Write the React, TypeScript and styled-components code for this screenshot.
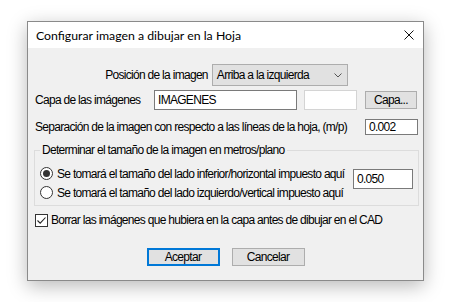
import styled, { createGlobalStyle } from "styled-components";

const GlobalStyle = createGlobalStyle`
  html, body {
    margin: 0;
    padding: 0;
    background: #fff;
  }
  body {
    width: 452px;
    height: 302px;
    overflow: hidden;
  }
`;

const Dialog = styled.div`
  margin: 21px 0 0 27px;
  width: 397px;
  height: 260px;
  box-sizing: border-box;
  border: 1px solid #8a8a8a;
  background: #f0f0f0;
  box-shadow: 0 5px 18px rgba(0, 0, 0, 0.28);
  display: flex;
  flex-direction: column;
  font-family: "Liberation Sans", Arial, sans-serif;
  font-size: 12px;
  letter-spacing: -0.7px;
  color: #000;
`;

const TitleBar = styled.div`
  height: 26px;
  flex: none;
  background: #fff;
  display: flex;
  align-items: center;
  justify-content: space-between;
  padding: 0 9px 0 8px;
  font-family: Lato, "Noto Sans", sans-serif;
  font-size: 12.3px;
  letter-spacing: 0;
`;

const Body = styled.div`
  padding: 16px 5px 0 7px;
  display: flex;
  flex-direction: column;
`;

const Row = styled.div<{ $top?: number; $h?: number; $center?: boolean }>`
  display: flex;
  align-items: center;
  height: ${({ $h }) => $h ?? 16}px;
  margin-top: ${({ $top }) => $top ?? 0}px;
  justify-content: ${({ $center }) => ($center ? "center" : "space-between")};
  white-space: nowrap;
`;

const Label = styled.span<{ $w?: number }>`
  ${({ $w }) => ($w ? `width: ${$w}px; flex: none;` : "")}
`;

const Select = styled.div`
  width: 136px;
  height: 22px;
  box-sizing: border-box;
  border: 1px solid #adadad;
  background: #e1e1e1;
  display: flex;
  align-items: center;
  justify-content: space-between;
  padding: 0 5px 0 4px;
`;

const Input = styled.div<{ $w: number; $h: number; $muted?: boolean }>`
  width: ${({ $w }) => $w}px;
  height: ${({ $h }) => $h}px;
  box-sizing: border-box;
  flex: none;
  background: #fff;
  border: 1px solid ${({ $muted }) => ($muted ? "#d4d4d4" : "#7a7a7a")};
  display: flex;
  align-items: center;
  padding-left: 3px;
`;

const Button = styled.div<{ $primary?: boolean; $w?: number }>`
  width: ${({ $w }) => $w ?? 73}px;
  height: 18px;
  box-sizing: border-box;
  flex: none;
  background: #e1e1e1;
  border: ${({ $primary }) => ($primary ? "2px solid #0078d7" : "1px solid #adadad")};
  display: flex;
  align-items: center;
  justify-content: center;
`;

const Group = styled.fieldset`
  margin: 8px -1px 0 -1px;
  padding: 7px 5px 3px 5px;
  border: 1px solid #dcdcdc;
  display: flex;
  align-items: flex-start;
  justify-content: space-between;
`;

const Legend = styled.legend`
  padding: 0 2px;
  line-height: 14px;
`;

const Options = styled.div`
  display: flex;
  flex-direction: column;
`;

const Option = styled.div`
  display: flex;
  align-items: center;
  gap: 4px;
  height: 19px;
  white-space: nowrap;
`;

const Radio = styled.span<{ $on?: boolean }>`
  width: 13px;
  height: 13px;
  box-sizing: border-box;
  border: 1px solid #333;
  border-radius: 50%;
  background: #fff;
  display: flex;
  align-items: center;
  justify-content: center;
  &::after {
    content: "";
    width: 7px;
    height: 7px;
    border-radius: 50%;
    background: ${({ $on }) => ($on ? "#333" : "transparent")};
  }
`;

const Check = styled.span`
  width: 13px;
  height: 13px;
  box-sizing: border-box;
  border: 1px solid #333;
  background: #fff;
  display: flex;
  align-items: center;
  justify-content: center;
`;

const CheckRow = styled.div`
  display: flex;
  align-items: center;
  gap: 3px;
  height: 16px;
  margin-top: 6px;
  white-space: nowrap;
`;

const Buttons = styled.div`
  display: flex;
  justify-content: center;
  gap: 12px;
  margin-top: 20px;
  padding-right: 2px;
`;

export default function App() {
  return (
    <>
      <GlobalStyle />
      <Dialog>
        <TitleBar>
          <span>Configurar imagen a dibujar en la Hoja</span>
          <svg width="10" height="10" viewBox="0 0 10 10">
            <path d="M0.5 0.5 L9.5 9.5 M9.5 0.5 L0.5 9.5" stroke="#111" strokeWidth="1" />
          </svg>
        </TitleBar>
        <Body>
          <Row $h={22} $center style={{ gap: 4 }}>
            <Label>Posición de la imagen</Label>
            <Select>
              <span>Arriba a la izquierda</span>
              <svg width="8" height="5" viewBox="0 0 8 5">
                <path d="M0.5 0.5 L4 4 L7.5 0.5" fill="none" stroke="#555" strokeWidth="1" />
              </svg>
            </Select>
          </Row>
          <Row $top={4} $h={20} style={{ justifyContent: "flex-start", gap: 7 }}>
            <Label $w={112}>Capa de las imágenes</Label>
            <Input $w={143} $h={20}>IMAGENES</Input>
            <Input $w={53} $h={20} $muted />
            <Button $w={52} style={{ marginLeft: 1 }}>Capa...</Button>
          </Row>
          <Row $top={9} $h={16}>
            <Label>Separación de la imagen con respecto a las líneas de la hoja, (m/p)</Label>
            <Input $w={53} $h={16}>0.002</Input>
          </Row>
          <Group>
            <Legend>Determinar el tamaño de la imagen en metros/plano</Legend>
            <Options>
              <Option>
                <Radio $on />
                <span>Se tomará el tamaño del lado inferior/horizontal impuesto aquí</span>
              </Option>
              <Option>
                <Radio />
                <span>Se tomará el tamaño del lado izquierdo/vertical impuesto aquí</span>
              </Option>
            </Options>
            <Input $w={60} $h={20} style={{ marginTop: 5 }}>0.050</Input>
          </Group>
          <CheckRow>
            <Check>
              <svg width="11" height="11" viewBox="0 0 11 11">
                <path d="M1.5 5.5 L4.2 8.2 L9.5 2.5" fill="none" stroke="#222" strokeWidth="1.1" />
              </svg>
            </Check>
            <span>Borrar las imágenes que hubiera en la capa antes de dibujar en el CAD</span>
          </CheckRow>
          <Buttons>
            <Button $primary>Aceptar</Button>
            <Button>Cancelar</Button>
          </Buttons>
        </Body>
      </Dialog>
    </>
  );
}
